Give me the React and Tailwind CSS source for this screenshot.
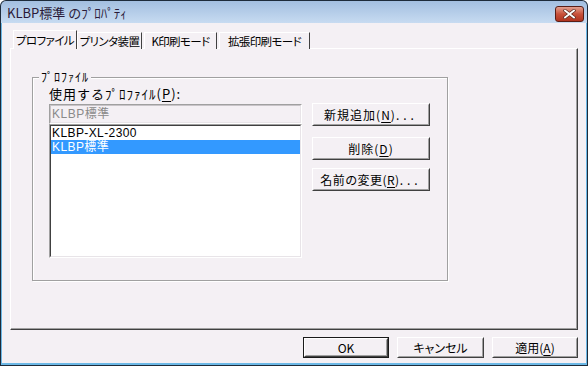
import React, { useState } from "react";

// ===== Dialog data =====
const tabs = ["プロファイル", "プリンタ装置", "K印刷モード", "拡張印刷モード"];
const tabWidths = ["w-[64px]", "w-[65px]", "w-[73px]", "w-[91px]"];
const profiles = ["KLBP-XL-2300", "KLBP標準"];

const font = "font-['Noto_Sans_CJK_JP','Noto_Sans',sans-serif] [font-feature-settings:'palt']";

// classic raised button
function Btn({ children, className = "", isDefault = false }) {
  return (
    <div
      className={`${className} ${
        isDefault ? "border border-[#1a1a1a]" : ""
      } bg-[#f4f0f4]`}
    >
      <div className="h-full border border-t-white border-l-white border-r-[#404040] border-b-[#404040]">
        <div className="h-full flex items-center justify-center whitespace-nowrap border border-t-[#f4f0f4] border-l-[#f4f0f4] border-r-[#a0a0a0] border-b-[#a0a0a0] text-[12px] leading-[14px] text-black">
          {children}
        </div>
      </div>
    </div>
  );
}

const U = ({ c }) => <span className="underline underline-offset-2">{c}</span>;

export default function App() {
  const [activeTab, setActiveTab] = useState(0);
  const [selected, setSelected] = useState(1);

  return (
    <div className={`${font} w-[588px] h-[366px] overflow-hidden bg-[#1d2b3a] p-px rounded-t-[6px]`}>
      <div className="w-full h-full flex flex-col rounded-t-[5px] overflow-hidden">
        {/* Title bar */}
        <div className="h-[22px] shrink-0 flex items-center justify-between bg-gradient-to-b from-[#a3bfe0] to-[#c7dbf1] pl-[6px] pr-[3px]">
          <span className="text-[13px] leading-[16px] text-[#2a1a38] pt-[2px] [font-feature-settings:normal]">KLBP標準 のﾌﾟﾛﾊﾟﾃｨ</span>
          <div className="w-[29px] h-[16px] mt-[4px] rounded-[3px] border border-[#5a1e16] bg-gradient-to-b from-[#e2a090] via-[#c8513a] to-[#b0331f] flex items-center justify-center">
            <svg width="13" height="10" viewBox="0 0 13 10">
              <path d="M2 1.5 L11 8.5 M11 1.5 L2 8.5" stroke="#5a2a20" strokeWidth="3.2" strokeLinecap="square" />
              <path d="M2 1.5 L11 8.5 M11 1.5 L2 8.5" stroke="#ffffff" strokeWidth="1.8" strokeLinecap="square" />
            </svg>
          </div>
        </div>

        {/* Body */}
        <div className="flex-1 flex flex-col bg-[#f4f0f4] border-l border-r border-b-2 border-[#6cb8e6] pl-[8px] pr-[8px]">
          {/* Tabs */}
          <div className="flex items-end pt-[7px] pl-[3px] h-[26px] relative z-10">
            {tabs.map((t, i) => {
              const active = i === activeTab;
              return (
                <div
                  key={t}
                  onClick={() => setActiveTab(i)}
                  className={`${tabWidths[i]} shrink-0 flex items-start justify-center whitespace-nowrap text-[11.5px] leading-[14px] tracking-[-0.6px] text-black border-t border-l border-r border-t-white border-l-white border-r-[#404040] bg-[#f4f0f4] ${
                    active ? "h-[19px] pt-[2px] -mr-[2px] relative" : "h-[17px] ml-[2px] pt-[1px]"
                  }`}
                >
                  {t}
                </div>
              );
            })}
          </div>

          {/* Tab panel */}
          <div className="h-[282px] -mt-px border border-t-white border-l-white border-r-[#404040] border-b-[#404040]">
            <div className="h-full border-r border-b border-r-[#a0a0a0] border-b-[#a0a0a0] pt-[28px] pl-[21px]">
              {/* Group box */}
              <div className="relative w-[416px] h-[204px] border border-[#a0a0a0] shadow-[inset_1px_1px_0_#ffffff,1px_1px_0_#ffffff] pl-[16px] pt-[9px]">
                <span className="absolute left-[6px] -top-[8px] px-[2px] bg-[#f4f0f4] text-[12px] leading-[14px] tracking-[1px] [font-feature-settings:normal]">ﾌﾟﾛﾌｧｲﾙ</span>
                <div className="text-[13px] leading-[14px] tracking-[1px] text-black [font-feature-settings:normal]">
                  使用するﾌﾟﾛﾌｧｲﾙ(<U c="P" />):
                </div>
                <div className="flex gap-[10px] mt-[3px]">
                  {/* left column */}
                  <div className="w-[253px] flex flex-col font-['Liberation_Sans','Noto_Sans_CJK_JP',sans-serif]">
                    <div className="h-[20px] border border-t-[#a0a0a0] border-l-[#a0a0a0] border-r-white border-b-white">
                      <div className="h-full border border-t-[#c8c4c8] border-l-[#c8c4c8] border-r-[#e8e4e8] border-b-[#e8e4e8] px-[1px] text-[12px] leading-[16px] tracking-[0.5px] text-[#8a8a8a]">
                        KLBP標準
                      </div>
                    </div>
                    <div className="h-[134px] border border-t-[#a0a0a0] border-l-[#a0a0a0] border-r-white border-b-white">
                      <div className="h-full border border-t-[#404040] border-l-[#404040] border-r-[#e8e4e8] border-b-[#e8e4e8] bg-white">
                        {profiles.map((p, i) => (
                          <div
                            key={p}
                            onClick={() => setSelected(i)}
                            className={`h-[14px] px-[1px] flex items-center text-[12px] leading-none tracking-[0.4px] ${
                              i === selected ? "bg-[#3399ff] text-white" : "text-black"
                            }`}
                          >
                            {p}
                          </div>
                        ))}
                      </div>
                    </div>
                  </div>
                  {/* right column */}
                  <div className="flex flex-col">
                    <Btn className="w-[118px] h-[23px] -mt-px">
                      <span className="tracking-[1px]">新規追加(<U c="N" />)<span className="tracking-[4px]">...</span></span>
                    </Btn>
                    <Btn className="w-[118px] h-[23px] mt-[11px]">
                      <span className="tracking-[1px]">削除(<U c="D" />)</span>
                    </Btn>
                    <Btn className="w-[118px] h-[23px] mt-[8px]">
                      <span className="tracking-[0.5px]">名前の変更(<U c="R" />)<span className="tracking-[4px]">...</span></span>
                    </Btn>
                  </div>
                </div>
              </div>
            </div>
          </div>

          {/* Bottom buttons */}
          <div className="flex justify-end gap-[8px] mt-[7px] pr-0">
            <Btn isDefault className="w-[86px] h-[21px]">OK</Btn>
            <Btn className="w-[87px] h-[21px]">キャンセル</Btn>
            <Btn className="w-[86px] h-[21px]">
              適用(<U c="A" />)
            </Btn>
          </div>
        </div>
      </div>
    </div>
  );
}
